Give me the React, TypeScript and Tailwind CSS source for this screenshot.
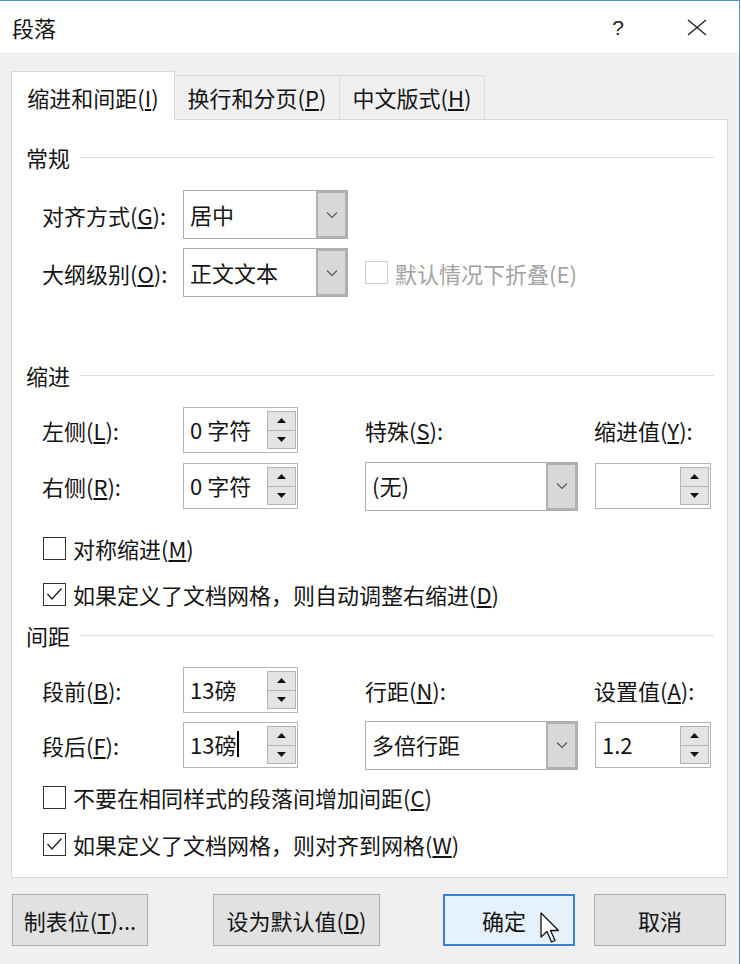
import React from 'react';

const font = { fontFamily: '"Noto Sans CJK SC", "Liberation Sans", sans-serif' };

function Chevron() {
  return (
    <svg width="12" height="8" viewBox="0 0 12 8">
      <path d="M1 1.5 L6 6.5 L11 1.5" fill="none" stroke="#5a5a5a" strokeWidth="1.2" />
    </svg>
  );
}

function Arrow({ up }: { up: boolean }) {
  return (
    <svg width="9" height="5" viewBox="0 0 9 5">
      {up ? <path d="M0 5 L4.5 0 L9 5 Z" fill="#111" /> : <path d="M0 0 L4.5 5 L9 0 Z" fill="#111" />}
    </svg>
  );
}

function Spin({ value, className, caret }: { value: string; className: string; caret?: boolean }) {
  return (
    <div className={`flex h-[46px] border border-[#b4b4b4] bg-white ${className}`}>
      <div className="flex flex-1 items-center pl-[6px] pb-[3px]">
        {value}
        {caret && <span className="ml-[1px] inline-block h-[26px] w-[2px] bg-black" />}
      </div>
      <div className="my-[3px] mr-[1px] flex w-[29px] flex-col">
        <div className="flex flex-1 items-center justify-center border border-[#b4b4b4] bg-[#e4e4e4]">
          <Arrow up />
        </div>
        <div className="flex flex-1 items-center justify-center border border-t-0 border-[#b4b4b4] bg-[#e4e4e4]">
          <Arrow up={false} />
        </div>
      </div>
    </div>
  );
}

function Combo({ value, className }: { value: string; className: string }) {
  return (
    <div className={`flex h-[49px] border border-[#adadad] bg-white ${className}`}>
      <div className="flex flex-1 items-center pl-[6px] pb-[2px]">{value}</div>
      <div className="flex w-[31px] items-center justify-center border-2 border-[#b0b0b0] bg-[#d8d8d8]">
        <Chevron />
      </div>
    </div>
  );
}

function Check({ checked, disabled }: { checked?: boolean; disabled?: boolean }) {
  return (
    <div
      className={`flex h-[23px] w-[23px] items-center justify-center border bg-white ${
        disabled ? 'border-[#cfcfcf]' : 'border-[#333333]'
      }`}
    >
      {checked && (
        <svg width="17" height="14" viewBox="0 0 17 14">
          <path d="M1.5 7 L6 12 L15.5 1.5" fill="none" stroke="#222" strokeWidth="1.4" />
        </svg>
      )}
    </div>
  );
}

function Header({ title }: { title: string }) {
  return (
    <div className="flex h-[28px] items-center pl-[14px] pr-[13px]">
      <span>{title}</span>
      <div className="ml-[10px] h-px flex-1 bg-[#dcdcdc]" />
    </div>
  );
}

function CheckRow({ checked, children }: { checked?: boolean; children: React.ReactNode }) {
  return (
    <div className="flex h-[28px] items-center pl-[31px]">
      <Check checked={checked} />
      <span className="ml-[7px]">{children}</span>
    </div>
  );
}

export default function App() {
  return (
    <div className="h-[964px] w-[741px] bg-white text-[22px] leading-none text-[#141414]" style={font}>
      <div className="relative flex h-[964px] w-[740px] flex-col border-t border-r border-[#4f8ed8] bg-[#f0f0f0]">
        {/* title bar */}
        <div className="flex h-[52px] items-center bg-white pl-[12px]">
          <span>段落</span>
          <span className="ml-auto mr-[63px] text-[21px] text-[#222]" style={{ fontFamily: '"Liberation Sans", sans-serif' }}>
            ?
          </span>
          <svg width="20" height="17" viewBox="0 0 20 17" className="mr-[32px]">
            <path d="M1 1 L19 16 M19 1 L1 16" stroke="#222" strokeWidth="1.4" />
          </svg>
        </div>

        {/* tabs */}
        <div className="flex items-end pl-[11px] pt-[18px]">
          <div className="relative z-10 -mb-px flex h-[49px] w-[164px] items-center justify-center border border-b-0 border-[#d9d9d9] bg-white pt-[2px]">
            <span>
              缩进和间距(<u>I</u>)
            </span>
          </div>
          <div className="flex h-[44px] w-[165px] items-center justify-center border border-l-0 border-b-0 border-[#d9d9d9] pb-[2px]">
            <span>
              换行和分页(<u>P</u>)
            </span>
          </div>
          <div className="flex h-[44px] w-[145px] items-center justify-center border border-l-0 border-b-0 border-[#d9d9d9] pb-[2px]">
            <span>
              中文版式(<u>H</u>)
            </span>
          </div>
        </div>

        {/* panel */}
        <div className="mx-[11px] flex h-[759px] flex-col border border-[#d9d9d9] bg-white pt-[23px]">
          <Header title="常规" />

          <div className="mt-[19px] flex items-center pl-[30px]">
            <span className="w-[141px]">
              对齐方式(<u>G</u>):
            </span>
            <Combo value="居中" className="w-[165px]" />
          </div>
          <div className="mt-[9px] flex items-center pl-[30px]">
            <span className="w-[141px]">
              大纲级别(<u>O</u>):
            </span>
            <Combo value="正文文本" className="w-[165px]" />
            <div className="ml-[17px] flex items-center text-[#a2a2a2]">
              <Check disabled />
              <span className="ml-[7px]">默认情况下折叠(E)</span>
            </div>
          </div>

          <div className="mt-[64px]">
            <Header title="缩进" />
          </div>

          <div className="mt-[17px] flex h-[48px] items-center pl-[30px]">
            <span className="w-[141px]">
              左侧(<u>L</u>):
            </span>
            <Spin value="0 字符" className="w-[115px]" />
            <span className="ml-[67px] w-[213px]">
              特殊(<u>S</u>):
            </span>
            <span className="ml-[16px]">
              缩进值(<u>Y</u>):
            </span>
          </div>
          <div className="mt-[8px] flex h-[48px] items-center pl-[30px]">
            <span className="w-[141px]">
              右侧(<u>R</u>):
            </span>
            <Spin value="0 字符" className="w-[115px]" />
            <Combo value="(无)" className="ml-[67px] w-[213px]" />
            <Spin value="" className="ml-[17px] w-[116px]" />
          </div>

          <div className="mt-[24px]">
            <CheckRow>
              对称缩进(<u>M</u>)
            </CheckRow>
          </div>
          <div className="mt-[18px]">
            <CheckRow checked>
              如果定义了文档网格，则自动调整右缩进(<u>D</u>)
            </CheckRow>
          </div>

          <div className="mt-[13px]">
            <Header title="间距" />
          </div>

          <div className="mt-[17px] flex h-[48px] items-center pl-[30px]">
            <span className="w-[141px]">
              段前(<u>B</u>):
            </span>
            <Spin value="13磅" className="w-[115px]" />
            <span className="ml-[67px] w-[213px]">
              行距(<u>N</u>):
            </span>
            <span className="ml-[16px]">
              设置值(<u>A</u>):
            </span>
          </div>
          <div className="mt-[7px] flex h-[48px] items-center pl-[30px]">
            <span className="w-[141px]">
              段后(<u>F</u>):
            </span>
            <Spin value="13磅" caret className="w-[115px]" />
            <Combo value="多倍行距" className="ml-[67px] w-[213px]" />
            <Spin value="1.2" className="ml-[17px] w-[116px]" />
          </div>

          <div className="mt-[14px]">
            <CheckRow>
              不要在相同样式的段落间增加间距(<u>C</u>)
            </CheckRow>
          </div>
          <div className="mt-[19px]">
            <CheckRow checked>
              如果定义了文档网格，则对齐到网格(<u>W</u>)
            </CheckRow>
          </div>
        </div>

        {/* buttons */}
        <div className="mt-[16px] flex pl-[12px]">
          <div className="flex h-[52px] w-[136px] items-center justify-center border border-[#adadad] bg-[#e1e1e1]">
            <span>
              制表位(<u>T</u>)...
            </span>
          </div>
          <div className="ml-[65px] flex h-[52px] w-[167px] items-center justify-center border border-[#adadad] bg-[#e1e1e1]">
            <span>
              设为默认值(<u>D</u>)
            </span>
          </div>
          <div className="ml-[63px] flex h-[52px] w-[132px] items-center justify-center border-2 border-[#3b80d4] bg-[#e5f1fb]">
            <span className="-ml-[10px]">确定</span>
          </div>
          <div className="ml-[19px] flex h-[52px] w-[132px] items-center justify-center border border-[#adadad] bg-[#e1e1e1]">
            <span>取消</span>
          </div>
        </div>

        {/* mouse pointer over OK */}
        <svg
          width="22"
          height="34"
          viewBox="0 0 22 34"
          className="absolute left-[540px] top-[911px]"
        >
          <path
            d="M1 1 L1 25 L7 19.5 L11.5 30 L15 28.5 L10.5 18.5 L18.5 18.5 Z"
            fill="#fff"
            stroke="#111"
            strokeWidth="1.3"
            strokeLinejoin="round"
          />
        </svg>
      </div>
    </div>
  );
}
